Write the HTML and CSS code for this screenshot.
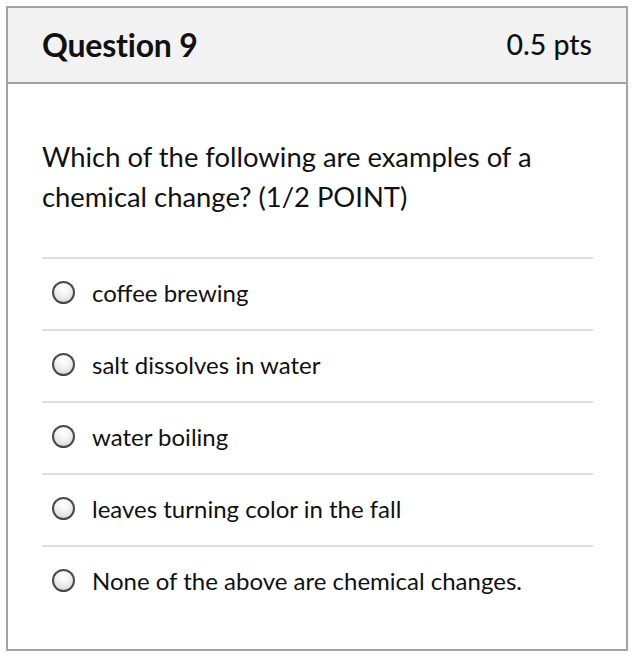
FILE: index.html
```html
<!DOCTYPE html>
<html>
<head>
<meta charset="utf-8">
<link rel="stylesheet" href="styles.css">
</head>
<body>
<div class="question">
  <div class="q-header">
    <span class="q-title">Question 9</span>
    <span class="q-points">0.5 pts</span>
  </div>
  <div class="q-body">
    <p class="q-text">Which of the following are examples of a chemical change? (1/2 POINT)</p>
    <div class="answers">
      <label class="answer"><span class="radio"></span><span class="a-text">coffee brewing</span></label>
      <label class="answer"><span class="radio"></span><span class="a-text">salt dissolves in water</span></label>
      <label class="answer"><span class="radio"></span><span class="a-text">water boiling</span></label>
      <label class="answer"><span class="radio"></span><span class="a-text">leaves turning color in the fall</span></label>
      <label class="answer"><span class="radio"></span><span class="a-text">None of the above are chemical changes.</span></label>
    </div>
  </div>
</div>
</body>
</html>
```
FILE: styles.css
```css
* { box-sizing: border-box; }
html, body { margin: 0; padding: 0; background: #fff; }
body {
  font-family: Lato, "Liberation Sans", sans-serif;
  color: #111;
  padding: 6px;
}
.question {
  width: 622px;
  height: 645px;
  border: 2px solid #a3a3a3;
  display: flex;
  flex-direction: column;
}
.q-header {
  height: 76px;
  background: #f2f2f2;
  border-bottom: 2px solid #a3a3a3;
  display: flex;
  align-items: center;
  justify-content: space-between;
  padding: 0 34px 2px 34px;
}
.q-title {
  font-size: 32px;
  font-weight: 700;
  color: #111;
  letter-spacing: -0.2px;
}
.q-points {
  font-size: 28.5px;
  font-weight: 500;
  color: #111;
}
.q-body {
  padding: 53px 33px 0 34px;
}
.q-text {
  margin: 0;
  font-size: 27.4px;
  line-height: 40px;
  color: #111;
  padding-right: 30px;
}
.answers {
  margin-top: 40px;
}
.answer {
  display: flex;
  align-items: center;
  height: 72px;
  border-top: 2px solid #dcdcdc;
  padding-left: 10px;
  padding-bottom: 3px;
}
.radio {
  width: 23px;
  height: 23px;
  border-radius: 50%;
  border: 2px solid #4a4a4a;
  background: radial-gradient(circle at 50% 30%, #ffffff 0%, #f0f0f0 45%, #cfcfcf 100%);
  flex: none;
  margin-right: 17px;
}
.a-text {
  font-size: 24px;
  color: #111;
}
```
